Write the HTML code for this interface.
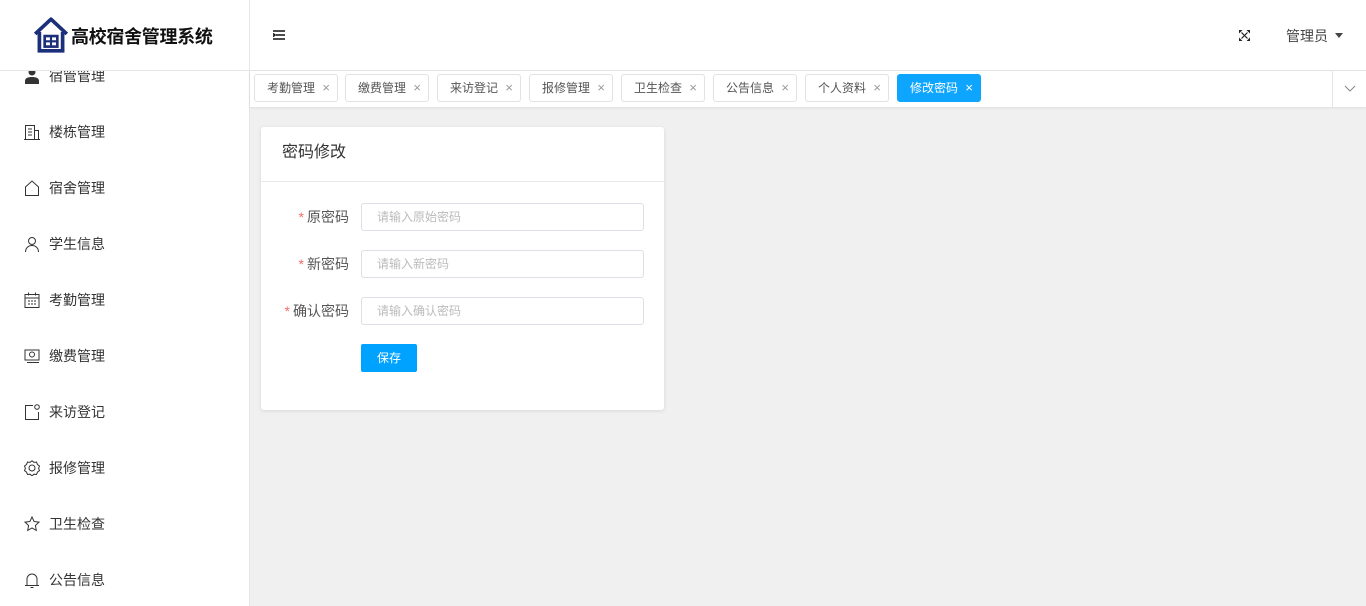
<!DOCTYPE html>
<html><head><meta charset="utf-8"><style>
*{box-sizing:border-box;margin:0;padding:0}
body{width:1366px;height:606px;overflow:hidden;background:#f0f0f0;font-family:"Liberation Sans","Noto Sans CJK SC",sans-serif;position:relative;color:#333}
.side{position:absolute;left:0;top:0;width:250px;height:606px;background:#fff;border-right:1px solid #e6e6e6;overflow:hidden}
.logo{position:absolute;left:0;top:0;width:249px;height:71px;border-bottom:1px solid #e6e6e6;background:#fff;z-index:2}
.logo span{position:absolute;left:71px;top:23px;font-size:18px;font-weight:bold;color:#111;letter-spacing:-0.3px}
.item{position:absolute;left:24px;font-size:14px;color:#333;height:20px;line-height:20px}
.item svg{position:absolute;left:0;top:2px}
.item b{position:absolute;left:25px;font-weight:normal;white-space:nowrap}
.top{position:absolute;left:250px;top:0;right:0;height:71px;background:#fff;border-bottom:1px solid #e6e6e6}
.tabs{position:absolute;left:250px;top:71px;right:0;height:36px;background:#fff;box-shadow:0 1px 3px rgba(0,0,0,.08)}
.tab{position:absolute;top:3px;height:28px;border:1px solid #e2e2e2;border-radius:3px;font-size:12px;color:#555;line-height:26px;padding-left:12px;background:#fff}
.tab i{position:absolute;right:7px;top:0;font-style:normal;color:#999;font-size:13px}
.tab.on{background:#0ea5ff;border-color:#0ea5ff;color:#fff}
.tab.on i{color:#fff}
.card{position:absolute;left:261px;top:127px;width:403px;height:283px;background:#fff;border-radius:3px;box-shadow:0 1px 4px rgba(0,0,0,.1)}
.card h3{font-weight:normal;font-size:16px;color:#333;height:55px;line-height:52px;padding-left:21px;border-bottom:1px solid #eaeaea}
.lab{position:absolute;right:315px;font-size:14px;color:#555;white-space:nowrap}
.lab em{color:#f56c6c;font-style:normal;margin-right:3px}
.inp{position:absolute;left:100px;width:283px;height:28px;border:1px solid #dcdfe6;border-radius:3px;font-size:12px;color:#bbb;line-height:26px;padding-left:15px}
.btn{position:absolute;left:100px;top:217px;width:56px;height:28px;background:#00a2ff;border-radius:2px;color:#fff;font-size:12px;text-align:center;line-height:28px}
</style></head><body>
<div class="side">
<div class="logo">
<svg style="position:absolute;left:32px;top:16px" width="38" height="38" viewBox="0 0 36 36"><path d="M3 17 L18 3 L33 17" fill="none" stroke="#1b2f7a" stroke-width="3.5" stroke-linejoin="round"/><path d="M7 15 V33 H29 V15" fill="none" stroke="#1b2f7a" stroke-width="3.5"/><rect x="12" y="19" width="12" height="10" fill="none" stroke="#1b2f7a" stroke-width="2.5"/><path d="M18 19V29M12 24H24" stroke="#1b2f7a" stroke-width="2"/></svg>
<span>高校宿舍管理系统</span></div>
<div class="item" style="top:66px"><svg width="16" height="16" viewBox="0 0 16 16"><circle cx="8" cy="4" r="3.5" fill="#333"/><path d="M1 16v-3c0-3 3-4 7-4s7 1 7 4v3z" fill="#333"/></svg><b>宿管管理</b></div>
<div class="item" style="top:122px"><svg width="16" height="16" viewBox="0 0 16 16" fill="none" stroke="#333"><path d="M1.5 15.5V1.5h9v14M10.5 6.5h4v9M0 15.5h16M4 5h4M4 8h4M4 11h4"/></svg><b>楼栋管理</b></div>
<div class="item" style="top:178px"><svg width="16" height="16" viewBox="0 0 16 16" fill="none" stroke="#333"><path d="M1.5 15.5V7L8 1l6.5 6v8.5z"/></svg><b>宿舍管理</b></div>
<div class="item" style="top:234px"><svg width="16" height="16" viewBox="0 0 16 16" fill="none" stroke="#333"><circle cx="8" cy="5" r="3.5"/><path d="M1.5 16c0-4 3-6.5 6.5-6.5s6.5 2.5 6.5 6.5"/></svg><b>学生信息</b></div>
<div class="item" style="top:290px"><svg width="16" height="16" viewBox="0 0 16 16" fill="none" stroke="#333"><rect x="1" y="2.5" width="14" height="13"/><path d="M1 6h14M4.5 0.5v3M11.5 0.5v3M4 9h2M7 9h2M10 9h2M4 12h2M7 12h2M10 12h2"/></svg><b>考勤管理</b></div>
<div class="item" style="top:346px"><svg width="16" height="16" viewBox="0 0 16 16" fill="none" stroke="#333"><rect x="1" y="2" width="14" height="10"/><circle cx="8" cy="6.5" r="2.5"/><path d="M3 14.5h12"/></svg><b>缴费管理</b></div>
<div class="item" style="top:402px"><svg width="16" height="16" viewBox="0 0 16 16" fill="none" stroke="#333"><path d="M9 1.5H1.5v14h13V8"/><circle cx="13" cy="3" r="2.3"/></svg><b>来访登记</b></div>
<div class="item" style="top:458px"><svg width="16" height="16" viewBox="0 0 16 16" fill="none" stroke="#333"><path d="M8 0.8l2 1.6 2.5-.3 1 2.4 2 1.5-.9 2.3.9 2.3-2 1.5-1 2.4-2.5-.3-2 1.6-2-1.6-2.5.3-1-2.4-2-1.5.9-2.3-.9-2.3 2-1.5 1-2.4 2.5.3z"/><circle cx="8" cy="8" r="3"/></svg><b>报修管理</b></div>
<div class="item" style="top:514px"><svg width="16" height="16" viewBox="0 0 16 16" fill="none" stroke="#333"><path d="M8 1l2.1 4.5 4.9.6-3.6 3.4.9 4.9L8 12l-4.3 2.4.9-4.9L1 6.1l4.9-.6z"/></svg><b>卫生检查</b></div>
<div class="item" style="top:570px"><svg width="16" height="16" viewBox="0 0 16 16" fill="none" stroke="#333"><path d="M3 13V7a5 5 0 0 1 10 0v6M1 13.5h14M6.5 15.5h3"/></svg><b>公告信息</b></div>
</div>
<div class="top">
<svg style="position:absolute;left:23px;top:30px" width="12" height="10" viewBox="0 0 12 10" stroke="#111" stroke-width="1.6"><path d="M0 1h12M3 5h9M0 9h12M0 3.5l2 1.5-2 1.5" fill="none"/></svg>
<svg style="position:absolute;left:989px;top:30px" width="11" height="11" viewBox="0 0 11 11" fill="#222" stroke="#222" stroke-width="1.2"><path d="M2.5 2.5l6 6M8.5 2.5l-6 6" fill="none"/><path d="M0 0h3.5L0 3.5zM11 0v3.5L7.5 0zM0 11V7.5L3.5 11zM11 11H7.5L11 7.5z" stroke="none"/></svg>
<span style="position:absolute;left:1036px;top:26px;font-size:14px;color:#444">管理员</span>
<span style="position:absolute;left:1085px;top:33px;border:4.5px solid transparent;border-top:5px solid #444"></span>
</div>
<div class="tabs">
<div class="tab" style="left:4px;width:84px">考勤管理<i>×</i></div>
<div class="tab" style="left:95px;width:84px">缴费管理<i>×</i></div>
<div class="tab" style="left:187px;width:84px">来访登记<i>×</i></div>
<div class="tab" style="left:279px;width:84px">报修管理<i>×</i></div>
<div class="tab" style="left:371px;width:84px">卫生检查<i>×</i></div>
<div class="tab" style="left:463px;width:84px">公告信息<i>×</i></div>
<div class="tab" style="left:555px;width:84px">个人资料<i>×</i></div>
<div class="tab on" style="left:647px;width:84px">修改密码<i>×</i></div>
<div style="position:absolute;right:0;top:0;width:34px;height:36px;border-left:1px solid #e6e6e6;background:#fff"><svg style="position:absolute;left:11px;top:14px" width="12" height="7" viewBox="0 0 12 7" fill="none" stroke="#888"><path d="M1 1l5 5 5-5"/></svg></div>
</div>
<div class="card">
<h3>密码修改</h3>
<div class="lab" style="top:80px"><em>*</em>原密码</div><div class="inp" style="top:76px">请输入原始密码</div>
<div class="lab" style="top:127px"><em>*</em>新密码</div><div class="inp" style="top:123px">请输入新密码</div>
<div class="lab" style="top:174px"><em>*</em>确认密码</div><div class="inp" style="top:170px">请输入确认密码</div>
<div class="btn">保存</div>
</div>
</body></html>
